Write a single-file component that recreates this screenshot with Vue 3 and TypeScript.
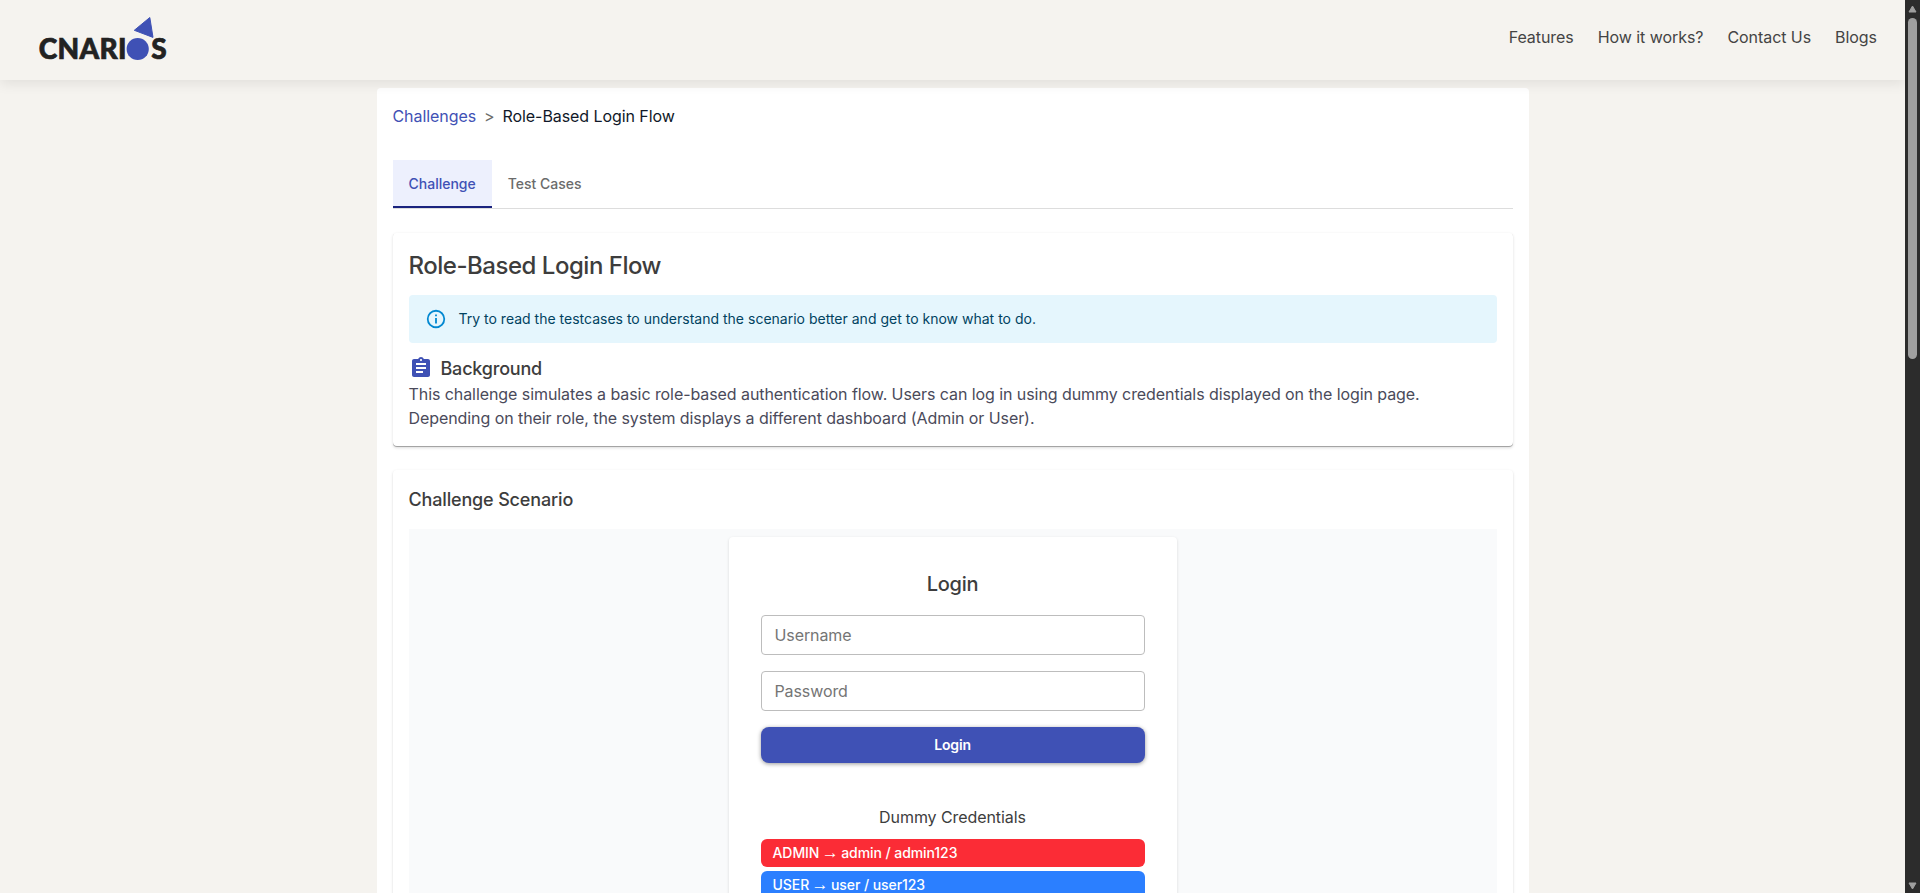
<script setup lang="ts">
import { ref } from 'vue'

interface Credential {
  role: string
  username: string
  password: string
  tone: string
}

const links: string[] = ['Features', 'How it works?', 'Contact Us', 'Blogs']
const tabs: string[] = ['Challenge', 'Test Cases']
const activeTab = ref<string>('Challenge')
const username = ref<string>('')
const password = ref<string>('')
const credentials: Credential[] = [
  { role: 'ADMIN', username: 'admin', password: 'admin123', tone: 'red' },
  { role: 'USER', username: 'user', password: 'user123', tone: 'blue' },
]
</script>

<template>
  <div class="window">
    <div class="page">
      <header class="topbar">
        <svg class="logo" width="130" height="50" viewBox="0 0 130 50" role="img" aria-label="CNARIOS">
          <g class="logo-text">
            <text x="0.8" y="44.2" textLength="87.5" lengthAdjust="spacing">CNARI</text>
            <text x="113.2" y="44.2">S</text>
          </g>
          <circle cx="99.7" cy="34" r="11.1" />
          <path d="M96.3 15.3 111.8 2.5 115 22.4Z" stroke-width="1" stroke-linejoin="round" />
        </svg>
        <nav class="nav">
          <a v-for="link in links" :key="link">{{ link }}</a>
        </nav>
      </header>

      <main class="container">
        <div class="breadcrumb">
          <a>Challenges</a><span class="sep">&gt;</span><span>Role-Based Login Flow</span>
        </div>

        <div class="tabs">
          <button
            v-for="tab in tabs"
            :key="tab"
            class="tab"
            :class="{ active: tab === activeTab }"
            @click="activeTab = tab"
          >{{ tab }}</button>
        </div>

        <section class="card intro">
          <h1>Role-Based Login Flow</h1>
          <div class="alert">
            <svg width="22" height="22" viewBox="0 0 24 24">
              <path d="M11,7H13V9H11V7M11,11H13V17H11V11M12,2A10,10 0 1,0 22,12A10,10 0 0,0 12,2M12,20C7.59,20 4,16.41 4,12S7.59,4 12,4 20,7.59 20,12 16.41,20 12,20Z" />
            </svg>
            <span>Try to read the testcases to understand the scenario better and get to know what to do.</span>
          </div>
          <h2 class="background">
            <svg width="24" height="24" viewBox="0 0 24 24">
              <path d="M19 3h-4.180C14.400 1.840 13.300 1 12 1c-1.300 0-2.400.840-2.820 2H5c-1.100 0-2 .900-2 2v14c0 1.100.900 2 2 2h14c1.100 0 2-.900 2-2V5c0-1.100-.900-2-2-2m-7 0c.550 0 1 .450 1 1s-.450 1-1 1-1-.450-1-1 .450-1 1-1m2 14H7v-2h7zm3-4H7v-2h10zm0-4H7V7h10z" />
            </svg>
            <span>Background</span>
          </h2>
          <p>
            This challenge simulates a basic role-based authentication flow. Users can log in using dummy credentials displayed on the login page.<br />
            Depending on their role, the system displays a different dashboard (Admin or User).
          </p>
        </section>

        <section class="card scenario">
          <h2>Challenge Scenario</h2>
          <div class="stage">
            <form class="login" @submit.prevent>
              <h3>Login</h3>
              <input v-model="username" placeholder="Username" />
              <input v-model="password" type="password" placeholder="Password" />
              <button class="submit" type="submit">Login</button>
              <div class="dummy">Dummy Credentials</div>
              <div v-for="c in credentials" :key="c.role" class="credential" :class="c.tone">
                {{ c.role }} <span class="arrow">→</span> {{ c.username }} / {{ c.password }}
              </div>
            </form>
          </div>
        </section>
      </main>
    </div>

    <aside class="scrollbar">
      <svg width="9" height="8" viewBox="0 0 9 8"><path d="M4.500 1 8 7H1Z" /></svg>
      <div class="thumb"></div>
      <svg class="down" width="9" height="8" viewBox="0 0 9 8"><path d="M4.500 7 8 1H1Z" /></svg>
    </aside>
  </div>
</template>

<style>
body {
  margin: 0;
  overflow: hidden;
}
</style>

<style scoped>
.window,
.window * {
  box-sizing: border-box;
}
.window {
  display: flex;
  height: 893px;
  overflow: hidden;
  font-family: Inter, 'Liberation Sans', sans-serif;
  font-size: 16px;
  line-height: 24px;
  letter-spacing: -0.072px;
  color: #3d3d3d;
}
.page {
  flex: 1;
  height: 893px;
  overflow: hidden;
  background: #f5f3ef;
}
.topbar {
  position: relative;
  display: flex;
  justify-content: space-between;
  height: 80px;
  padding: 15px 28px 0 38px;
  background: #f5f3ef;
  box-shadow: 0 4px 12px rgba(0, 0, 0, 0.08);
}
.logo {
  fill: #3f51b5;
  stroke: #3f51b5;
  stroke-width: 0;
}
.logo-text {
  fill: #222;
  stroke: #222;
  stroke-width: 0.7px;
  font-family: Lato, sans-serif;
  font-weight: 900;
  font-size: 28px;
}
.nav {
  display: flex;
  gap: 24px;
  padding-top: 10px;
  letter-spacing: -0.06px;
  color: #444;
}
.container {
  width: 1152px;
  height: 900px;
  margin: 8px auto 0;
  padding: 16px;
  background: #fff;
  border-radius: 4px;
}
.breadcrumb {
  display: flex;
  align-items: center;
  color: #101828;
}
.breadcrumb a {
  color: #3f51b5;
}
.sep {
  margin: 0 8px;
  font-size: 16px;
  color: #6b6b6b;
}
.tabs {
  display: flex;
  height: 49px;
  margin-top: 32px;
  border-bottom: 1px solid #ddd;
}
.tab {
  height: 48px;
  padding: 2px 16px 0;
  border: 0;
  border-bottom: 2px solid transparent;
  background: none;
  font: 500 14px/20px Inter, sans-serif;
  color: #6b6b6b;
}
.tab.active {
  border-color: #1a237e;
  background: #edf0fd;
  color: #3f51b5;
}
.card {
  padding: 16px;
  border-radius: 4px;
  background: #fff;
  box-shadow: 0 1px 3px rgba(0, 0, 0, 0.12), 0 1px 2px rgba(0, 0, 0, 0.06);
}
h1,
h2,
h3,
p {
  margin: 0;
  font-weight: 500;
}
.intro {
  height: 214px;
  margin-top: 24px;
  box-shadow: inset 0 -1px 0 #a4a4a4, 0 1px 3px rgba(0, 0, 0, 0.14);
}
h1 {
  padding-top: 1px;
  font-size: 24px;
  font-weight: 450;
  line-height: 32px;
  letter-spacing: -0.48px;
}
.alert {
  display: flex;
  align-items: center;
  gap: 12px;
  height: 48px;
  margin-top: 13px;
  padding: 0 16px;
  border-radius: 4px;
  background: #e5f6fd;
  font-size: 14px;
  letter-spacing: 0.005px;
  color: #014361;
}
.alert svg {
  fill: #0288d1;
}
.background {
  display: flex;
  align-items: center;
  gap: 8px;
  height: 27px;
  margin-top: 12px;
  font-size: 18px;
  letter-spacing: -0.2px;
}
.background svg {
  margin-bottom: 2px;
  fill: #3f51b5;
}
p {
  font-weight: 400;
  color: #4a4a5a;
}
.scenario {
  height: 600px;
  margin-top: 23px;
}
.scenario h2 {
  font-size: 18px;
  line-height: 28px;
  letter-spacing: -0.16px;
}
.stage {
  height: 500px;
  margin-top: 15px;
  padding-top: 8px;
  background: #f9fafb;
}
.login {
  display: flex;
  flex-direction: column;
  width: 448px;
  height: 480px;
  margin: 0 auto;
  padding: 32px;
  border-radius: 4px;
  background: #fff;
  box-shadow: 0 1px 3px rgba(0, 0, 0, 0.14);
}
h3 {
  font-size: 20px;
  line-height: 30px;
  letter-spacing: -0.3px;
  text-align: center;
}
input {
  width: 100%;
  height: 40px;
  margin-bottom: 16px;
  padding: 0 13px;
  border: 1px solid #bdbdbd;
  border-radius: 4px;
  background: #fff;
  font: 400 16px/24px Inter, sans-serif;
  letter-spacing: -0.1px;
}
h3 + input {
  margin-top: 16px;
}
input::placeholder {
  color: #757575;
  opacity: 1;
}
.submit {
  flex: none;
  height: 36px;
  border: 0;
  border-radius: 8px;
  background: #3f51b5;
  box-shadow: 0 1px 4px rgba(0, 0, 0, 0.4);
  font: 600 14px/20px Inter, sans-serif;
  letter-spacing: -0.15px;
  color: #fff;
}
.dummy {
  margin: 42px 0 10px;
  text-align: center;
}
.credential {
  flex: none;
  height: 28px;
  margin-bottom: 4px;
  padding: 0 12px;
  border-radius: 6px;
  font-size: 14px;
  font-weight: 500;
  line-height: 28px;
  color: #fff;
}
.arrow {
  margin: 0 -1.2px;
  font-family: 'Liberation Sans', sans-serif;
  font-size: 17px;
  font-weight: 400;
  line-height: 1;
}
.red {
  background: #fb2c36;
}
.blue {
  background: #2b7fff;
}
.scrollbar {
  display: flex;
  flex-direction: column;
  align-items: center;
  width: 15px;
  height: 893px;
  padding: 5px 0 3px;
  background: #2c2c2c;
}
.scrollbar svg {
  flex: none;
  fill: #9f9f9f;
  stroke: #9f9f9f;
  stroke-linejoin: round;
}
.thumb {
  width: 9px;
  height: 341px;
  margin-top: 5px;
  border-radius: 5px;
  background: #9f9f9f;
}
.down {
  margin-top: auto;
}
</style>
